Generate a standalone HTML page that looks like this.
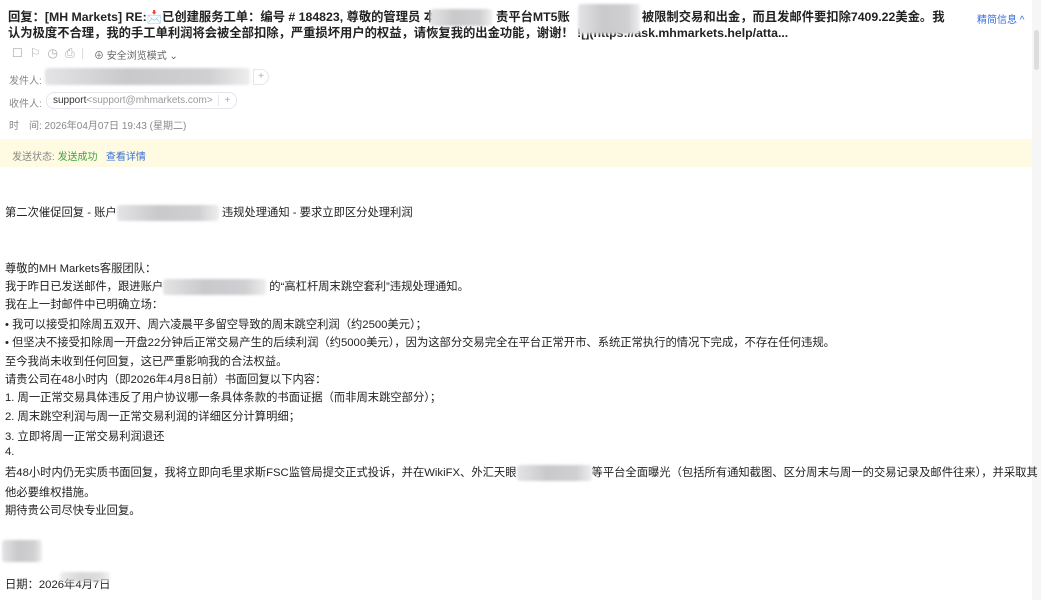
<!DOCTYPE html>
<html><head><meta charset="utf-8"><style>
*{margin:0;padding:0;box-sizing:border-box}
body{width:1041px;height:600px;overflow:hidden;background:#fff;font-family:"Liberation Sans","Noto Sans CJK SC",sans-serif;color:#222;position:relative}
.abs{position:absolute;white-space:nowrap}
.title{left:8px;font-size:12.3px;font-weight:bold;color:#222;line-height:16px}
.blur{position:absolute;background:linear-gradient(90deg,#e4e4e6,#c9c9cc 40%,#d0d0d3 80%,#eee);border-radius:3px;filter:blur(1.2px)}
.ib{display:inline-block;vertical-align:middle;height:16px;background:linear-gradient(90deg,#e4e4e6,#c9c9cc 40%,#d0d0d3 80%,#eee);border-radius:3px;filter:blur(1.2px)}
.lbl{font-size:10px;color:#888}
.b{left:5px;font-size:11.3px;color:#222}
</style></head><body>
<div class="abs title" style="top:9px">回复：[MH Markets] RE:<span style="font-weight:normal">📩</span>已创建服务工单：编号 # 184823, 尊敬的管理员 本<span style="display:inline-block;width:60px"></span>责平台MT5账<span style="display:inline-block;width:72px"></span>被限制交易和出金，而且发邮件要扣除7409.22美金。我</div>
<div class="abs title" style="top:25px">认为极度不合理，我的手工单利润将会被全部扣除，严重损坏用户的权益，请恢复我的出金功能，谢谢！ ![](https://ask.mhmarkets.help/atta...</div>
<div class="blur" style="left:430px;top:9px;width:62px;height:17px"></div>
<div class="blur" style="left:578px;top:4px;width:62px;height:30px"></div>
<div class="abs" style="left:977px;top:11px;font-size:10px;color:#3a6fd8">精简信息 ^</div>
<div style="position:absolute;left:1032px;top:0;width:9px;height:600px;background:#f6f6f6"></div>
<div style="position:absolute;left:1034px;top:30px;width:5px;height:40px;background:#ddd;border-radius:3px"></div>
<div class="abs" style="left:12px;top:46px;font-size:12px;color:#aaa;letter-spacing:7px">☐⚐◷⎙</div>
<div class="abs" style="left:82px;top:48px;width:1px;height:11px;background:#ddd"></div>
<div class="abs" style="left:94px;top:47px;font-size:10px;color:#666">⊕ 安全浏览模式 ⌄</div>
<div class="abs lbl" style="left:9px;top:72px">发件人:</div>
<div class="blur" style="left:45px;top:68px;width:205px;height:17px"></div>
<div class="abs" style="left:253px;top:69px;width:16px;height:16px;border:1px solid #e3e6ee;border-radius:0 8px 8px 0;font-size:10px;color:#aab;text-align:center;line-height:14px">+</div>
<div class="abs lbl" style="left:9px;top:95px">收件人:</div>
<div class="abs" style="left:46px;top:92px;height:17px;padding:0 6px;border:1px solid #e3e6ee;border-radius:8px;font-size:10px;line-height:15px;color:#999"><b style="color:#333;font-weight:normal">support</b>&lt;support@mhmarkets.com&gt; <span style="color:#aab;border-left:1px solid #e3e6ee;padding-left:5px;margin-left:3px">+</span></div>
<div class="abs lbl" style="left:9px;top:117px">时　间: 2026年04月07日 19:43 (星期二)</div>
<div style="position:absolute;left:0;top:139px;width:1032px;height:28px;background:#fefbe2"></div>
<div class="abs lbl" style="left:12px;top:148px">发送状态: <span style="color:#3da33d">发送成功</span>&nbsp;&nbsp;&nbsp;<span style="color:#3a6fd8">查看详情</span></div>
<div class="abs b" style="top:204px">第二次催促回复 - 账户<span class="ib" style="width:102px"></span> 违规处理通知 - 要求立即区分处理利润</div>
<div class="abs b" style="top:260px">尊敬的MH Markets客服团队：</div>
<div class="abs b" style="top:278px">我于昨日已发送邮件，跟进账户<span class="ib" style="width:103px"></span> 的“高杠杆周末跳空套利”违规处理通知。</div>
<div class="abs b" style="top:296px">我在上一封邮件中已明确立场：</div>
<div class="abs b" style="top:316px">•  我可以接受扣除周五双开、周六凌晨平多留空导致的周末跳空利润（约2500美元）；</div>
<div class="abs b" style="top:334px">•  但坚决不接受扣除周一开盘22分钟后正常交易产生的后续利润（约5000美元），因为这部分交易完全在平台正常开市、系统正常执行的情况下完成，不存在任何违规。</div>
<div class="abs b" style="top:353px">至今我尚未收到任何回复，这已严重影响我的合法权益。</div>
<div class="abs b" style="top:371px">请贵公司在48小时内（即2026年4月8日前）书面回复以下内容：</div>
<div class="abs b" style="top:389px">1.  周一正常交易具体违反了用户协议哪一条具体条款的书面证据（而非周末跳空部分）；</div>
<div class="abs b" style="top:408px">2.  周末跳空利润与周一正常交易利润的详细区分计算明细；</div>
<div class="abs b" style="top:428px">3.  立即将周一正常交易利润退还</div>
<div class="abs b" style="top:446px">4.</div>
<div class="abs b" style="top:464px">若48小时内仍无实质书面回复，我将立即向毛里求斯FSC监管局提交正式投诉，并在WikiFX、外汇天眼<span class="ib" style="width:75px"></span>等平台全面曝光（包括所有通知截图、区分周末与周一的交易记录及邮件往来），并采取其</div>
<div class="abs b" style="top:484px">他必要维权措施。</div>
<div class="abs b" style="top:502px">期待贵公司尽快专业回复。</div>
<div class="blur" style="left:2px;top:540px;width:40px;height:22px"></div>
<div class="abs b" style="top:576px">日期：2026年4月7日</div>
<div class="blur" style="left:60px;top:572px;width:50px;height:10px;opacity:.7"></div>
</body></html>
